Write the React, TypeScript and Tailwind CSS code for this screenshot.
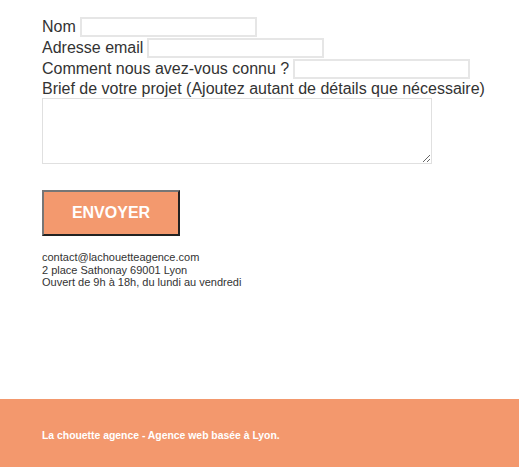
export default function App() {
  return (
    <div className="min-h-[467px] flex flex-col bg-white text-[#333] font-['Liberation_Sans',Arial,sans-serif]">
      <form className="px-[42px] pt-[16px] flex-1" onSubmit={e => e.preventDefault()}>
        <div className="text-[16px] leading-[21px]">
          <label className="flex items-center gap-[4px]">
            Nom
            <input type="text" className="w-[177px] h-[20px] border-2 border-[#e6e6e6] outline-none" />
          </label>
          <label className="flex items-center gap-[4px]">
            Adresse email
            <input type="email" className="w-[177px] h-[20px] border-2 border-[#e6e6e6] outline-none" />
          </label>
          <label className="flex items-center gap-[4px]">
            Comment nous avez-vous connu ?
            <input type="text" className="w-[177px] h-[20px] border-2 border-[#e6e6e6] outline-none" />
          </label>
          <label className="block whitespace-nowrap leading-[19px]">Brief de votre projet (Ajoutez autant de détails que nécessaire)</label>
          <textarea className="block w-[390px] h-[66px] border border-[#e0e0e0] outline-none" />
        </div>
        <button
          type="submit"
          className="mt-[26px] w-[138px] h-[46px] bg-[#f3996e] text-white font-bold text-[16px] border-2 border-t-[#767676] border-l-[#767676] border-r-[#222] border-b-[#222]"
        >
          ENVOYER
        </button>
        <div className="mt-[15px] text-[11px] leading-[12.5px]">
          <div>contact@lachouetteagence.com</div>
          <div>2 place Sathonay 69001 Lyon</div>
          <div>Ouvert de 9h à 18h, du lundi au vendredi</div>
        </div>
      </form>
      <footer className="h-[68px] bg-[#f3986d] px-[42px] flex items-center">
        <p className="text-white font-bold text-[10.4px] mt-[6px]">La chouette agence - Agence web basée à Lyon.</p>
      </footer>
    </div>
  );
}
